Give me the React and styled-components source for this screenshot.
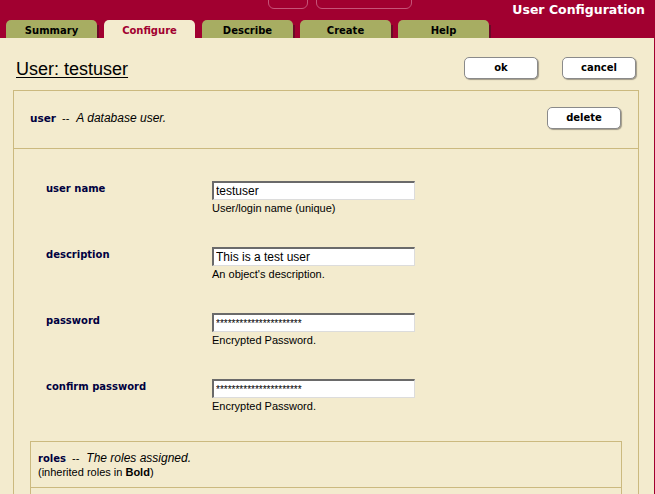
import React from "react";
import styled, { createGlobalStyle } from "styled-components";

const GlobalStyle = createGlobalStyle`
	html, body {
		margin: 0;
		padding: 0;
		background: #f3ebce;
		overflow: hidden;
	}
	body {
		font-family: "Liberation Sans", Arial, sans-serif;
	}
`;

const CRIMSON = "#a10030";
const BEIGE = "#f3ebce";
const OLIVE = "#a7ad62";
const TAN = "#cbb97f";
const NAVY = "#000040";
const BOLD_FONT = `"DejaVu Sans", Verdana, sans-serif`;

const Page = styled.div`
	width: 655px;
	height: 494px;
	display: flex;
	flex-direction: column;
	overflow: hidden;
`;

const Header = styled.div`
	background: ${CRIMSON};
	height: 38px;
	display: flex;
	flex-direction: column;
	flex-shrink: 0;
`;

const TopRow = styled.div`
	height: 20px;
	display: flex;
	align-items: flex-start;
`;

const StubGroup = styled.div`
	display: flex;
	gap: 8px;
	margin-left: 268px;
`;

const Stub = styled.div`
	width: ${p => p.$w}px;
	height: 19px;
	margin-top: -10px;
	box-sizing: border-box;
	border: 1px solid #c65478;
	border-radius: 6px;
`;

const AppTitle = styled.div`
	margin-left: auto;
	padding: 1px 10px 0 0;
	color: #fff;
	font: bold 12.5px/18px ${BOLD_FONT};
`;

const TabRow = styled.div`
	height: 18px;
	display: flex;
	gap: 7px;
	padding-left: 6px;
`;

const Tab = styled.div`
	position: relative;
	width: 91px;
	height: 18px;
	box-sizing: border-box;
	padding-top: 4px;
	text-align: center;
	border-radius: 5px 5px 0 0;
	background: ${p => (p.$active ? BEIGE : OLIVE)};
	color: ${p => (p.$active ? CRIMSON : "#000")};
	font: bold 10px/14px ${BOLD_FONT};

	&::after {
		content: "";
		display: ${p => (p.$active ? "none" : "block")};
		position: absolute;
		top: 5px;
		bottom: 0;
		right: -2px;
		width: 2px;
		background: #6b0a28;
	}
`;

const Main = styled.div`
	flex: 1;
	border-right: 1px solid ${CRIMSON};
	width: 654px;
	display: flex;
	flex-direction: column;
`;

const TitleRow = styled.div`
	height: 52px;
	box-sizing: border-box;
	display: flex;
	align-items: flex-start;
	padding: 19px 18px 0 16px;
`;

const PageTitle = styled.h1`
	margin: 2px 0 0;
	font: normal 18px/20px "Liberation Sans", Arial, sans-serif;
	color: #000;
	text-decoration: underline;
	text-underline-offset: 2px;
`;

const ButtonGroup = styled.div`
	margin-left: auto;
	display: flex;
	gap: 24px;
`;

const Button = styled.button`
	width: 74px;
	height: 22px;
	padding: 0;
	background: #fff;
	border: 1px solid #8a8a8a;
	border-radius: 5px;
	box-shadow: 1px 1px 1px #a09a88;
	color: #000;
	font: bold 10px/1 ${BOLD_FONT};
	cursor: pointer;
`;

const Panel = styled.div`
	margin: 0 15px 0 13px;
	border: 1px solid ${TAN};
	border-bottom: none;
	flex: 1;
`;

const SectionHeader = styled.div`
	height: ${p => p.$h}px;
	border-bottom: 1px solid ${TAN};
	display: flex;
	align-items: ${p => (p.$top ? "flex-start" : "center")};
	padding: ${p => (p.$top ? "9px 8px 0 7px" : "0 17px 4px 16px")};
	box-sizing: border-box;
`;

const HeaderText = styled.div`
	font-size: 11px;
	line-height: 14px;
	color: #000;
`;

const Name = styled.span`
	font: bold ${p => p.$size || 10}px ${BOLD_FONT};
	color: ${NAVY};
`;

const Dash = styled.span`
	font-size: 11px;
	margin: 0 7px 0 6px;
`;

const Desc = styled.span`
	font-style: italic;
	font-size: 12px;
`;

const FormRows = styled.div`
	display: flex;
	flex-direction: column;
	gap: 32px;
	padding: 32px 0 0 32px;
`;

const Row = styled.div`
	display: flex;
	align-items: flex-start;
`;

const Label = styled.div`
	width: 166px;
	padding-top: 2px;
	font: bold 10px/12px ${BOLD_FONT};
	color: ${NAVY};
`;

const Field = styled.div`
	display: flex;
	flex-direction: column;
`;

const Input = styled.input`
	width: 203px;
	height: 19px;
	box-sizing: border-box;
	margin: 0;
	padding: 0 2px;
	background: #fff;
	border-style: solid;
	border-width: 2px 1px 1px 2px;
	border-color: #6a6a6a #dcdcdc #dcdcdc #6a6a6a;
	font-family: "Liberation Sans", Arial, sans-serif;
	font-size: ${p => (p.$secret ? 10 : 12)}px;
	color: #000;
	outline: none;
`;

const Hint = styled.div`
	margin-top: 1px;
	font-size: 11px;
	line-height: 14px;
	color: #000;
`;

const RolesBox = styled.div`
	margin: 28px 16px 0 16px;
	border: 1px solid ${TAN};
	border-bottom: none;
	height: 80px;
`;

const fields = [
	{ label: "user name", value: "testuser", hint: "User/login name (unique)" },
	{ label: "description", value: "This is a test user", hint: "An object's description." },
	{ label: "password", value: "*".repeat(22), hint: "Encrypted Password.", secret: true },
	{ label: "confirm password", value: "*".repeat(22), hint: "Encrypted Password.", secret: true }
];

const tabs = ["Summary", "Configure", "Describe", "Create", "Help"];

export default function App() {
	return (
		<Page>
			<GlobalStyle/>
			<Header>
				<TopRow>
					<StubGroup>
						<Stub $w={40}/>
						<Stub $w={96}/>
					</StubGroup>
					<AppTitle>User Configuration</AppTitle>
				</TopRow>
				<TabRow>
					{tabs.map(t => (
						<Tab key={t} $active={t === "Configure"}>{t}</Tab>
					))}
				</TabRow>
			</Header>
			<Main>
				<TitleRow>
					<PageTitle>User: testuser</PageTitle>
					<ButtonGroup>
						<Button>ok</Button>
						<Button>cancel</Button>
					</ButtonGroup>
				</TitleRow>
				<Panel>
					<SectionHeader $h={58}>
						<HeaderText>
							<Name $size={10.5}>user</Name>
							<Dash>--</Dash>
							<Desc>A database user.</Desc>
						</HeaderText>
						<ButtonGroup>
							<Button>delete</Button>
						</ButtonGroup>
					</SectionHeader>
					<FormRows>
						{fields.map(f => (
							<Row key={f.label}>
								<Label>{f.label}</Label>
								<Field>
									<Input type="text" readOnly defaultValue={f.value} $secret={f.secret}/>
									<Hint>{f.hint}</Hint>
								</Field>
							</Row>
						))}
					</FormRows>
					<RolesBox>
						<SectionHeader $h={46} $top>
							<HeaderText>
								<Name>roles</Name>
								<Dash>--</Dash>
								<Desc>The roles assigned.</Desc>
								<br/>
								(inherited roles in <b>Bold</b>)
							</HeaderText>
						</SectionHeader>
					</RolesBox>
				</Panel>
			</Main>
		</Page>
	);
}
